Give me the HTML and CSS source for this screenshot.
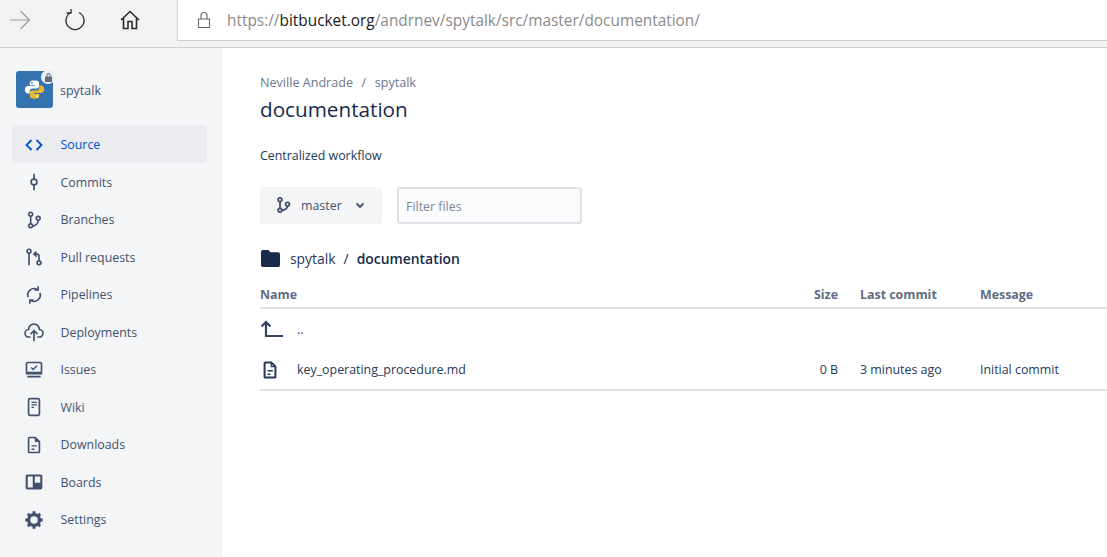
FILE: index.html
```html
<!DOCTYPE html>
<html lang="en">
<head>
    <meta charset="UTF-8">
    <title>spytalk / documentation</title>
    <link rel="stylesheet" href="styles.css">
</head>
<body>
    <header class="toolbar">
        <div class="nav-buttons">
            <svg class="nav-icon" width="24" height="24" viewBox="0 0 24 24" fill="none" stroke="#9a9a9a" stroke-width="1.2"><path d="M2 12h19M12.500 3l9 9-9 9"/></svg>
            <svg class="nav-icon" width="24" height="24" viewBox="0 0 24 24" fill="none" stroke="#2b2b2b" stroke-width="1.3"><path d="M8 4.500a9 9 0 1 0 8 0M8 1v4H3.500"/></svg>
            <svg class="nav-icon" width="24" height="24" viewBox="0 0 24 24" fill="none" stroke="#2b2b2b" stroke-width="1.6"><path d="M3 12l9-8.500 9 8.500M5.500 10v10.500h4.500v-7h4v7h4.500V10"/></svg>
        </div>
        <div class="url-box">
            <svg width="16" height="18" viewBox="0 0 16 18" fill="none" stroke="#666" stroke-width="1.1"><path d="M2.500 8h11v8.500h-11zM5 8V4.500a3 3 0 0 1 6 0V8"/></svg>
            <span class="url"><span class="url-dim">https://</span>bitbucket.org<span class="url-dim">/andrnev/spytalk/src/master/documentation/</span></span>
        </div>
    </header>

    <div class="page">
        <aside class="sidebar">
            <div class="repo">
                <div class="avatar">
                    <svg width="21" height="21" viewBox="0 0 24 24">
                        <path fill="#fff" d="M12 1.500c-3.500 0-5.500 1-5.500 3V7h6v1H4.500C2.500 8 1 9.500 1 12.300s1.500 4.400 3.500 4.400h2v-2.500c0-2 1.500-3.400 3.500-3.400h4.500c1.500 0 2.700-1.200 2.700-2.800v-3.500c0-2-2.200-3-5.700-3z"/>
                        <path fill="#e8b92c" d="M12 22.500c3.500 0 5.500-1 5.500-3V17h-6v-1h8c2 0 3.500-1.500 3.500-4.300s-1.500-4.400-3.500-4.400h-2v2.500c0 2-1.500 3.400-3.500 3.400H9.500c-1.500 0-2.700 1.200-2.700 2.800v3.500c0 2 1.700 3 5.200 3z"/>
                        <circle cx="9" cy="4.300" r="1" fill="#3572b0"/>
                        <circle cx="15" cy="19.700" r="1" fill="#fff"/>
                    </svg>
                    <span class="lock-badge">
                        <svg width="9" height="10" viewBox="0 0 9 10"><path fill="#5e6c84" d="M1 4.500h7V10H1zM2.500 4.500V3a2 2 0 0 1 4 0v1.500h-1V3a1 1 0 0 0-2 0v1.500z"/></svg>
                    </span>
                </div>
                <span class="repo-name">spytalk</span>
            </div>
            <nav class="side-nav">
                <a class="side-item active">
                    <svg class="side-icon" viewBox="0 0 24 24" fill="none" stroke="currentColor" stroke-width="2.200"><path d="M9 6l-6 6 6 6M15 6l6 6-6 6"/></svg>
                    Source
                </a>
                <a class="side-item">
                    <svg class="side-icon" viewBox="0 0 24 24" fill="none" stroke="currentColor" stroke-width="2"><circle cx="12" cy="12" r="3.500"/><path d="M12 2v6.500M12 15.500V22"/></svg>
                    Commits
                </a>
                <a class="side-item">
                    <svg class="side-icon" viewBox="0 0 24 24" fill="none" stroke="currentColor" stroke-width="2"><circle cx="8" cy="5" r="2.300"/><circle cx="8" cy="19" r="2.300"/><circle cx="17" cy="10" r="2.300"/><path d="M8 7.300v9.400M10.300 19c4 0 6.700-3 6.700-6.700"/></svg>
                    Branches
                </a>
                <a class="side-item">
                    <svg class="side-icon" viewBox="0 0 24 24" fill="none" stroke="currentColor" stroke-width="2"><circle cx="6" cy="5" r="2.300"/><circle cx="18" cy="19" r="2.300"/><path d="M6 7.300V22M18 16.700V11c0-1.500-1-2.500-2.500-2.500H13M15 5.500l-3 3 3 3"/></svg>
                    Pull requests
                </a>
                <a class="side-item">
                    <svg class="side-icon" viewBox="0 0 24 24" fill="none" stroke="currentColor" stroke-width="2"><path d="M5 14.500A7.500 7.500 0 0 1 16 5.500M19 9.500A7.500 7.500 0 0 1 8 18.500M17 1.500v4.500h-4.500M7 22.500V18h4.500"/></svg>
                    Pipelines
                </a>
                <a class="side-item">
                    <svg class="side-icon" viewBox="0 0 24 24" fill="none" stroke="currentColor" stroke-width="2"><path d="M8 18H6a4.500 4.500 0 0 1-.5-9 6.500 6.500 0 0 1 13 0 4.500 4.500 0 0 1-.5 9h-2M12 23V11M8 14.500l4-4 4 4"/></svg>
                    Deployments
                </a>
                <a class="side-item">
                    <svg class="side-icon" viewBox="0 0 24 24" fill="none"><rect x="3" y="3" width="18" height="12" rx="1.500" stroke="currentColor" stroke-width="2"/><path d="M8.500 9l2.500 2.500 4.500-4.500" stroke="currentColor" stroke-width="1.700"/><path d="M2 15h20v2.500H2zM4 19h16v2H4z" fill="currentColor"/></svg>
                    Issues
                </a>
                <a class="side-item">
                    <svg class="side-icon" viewBox="0 0 24 24" fill="none" stroke="currentColor"><rect x="5.500" y="2" width="13" height="20" rx="1.500" stroke-width="2"/><path d="M9 6.500h6.500M9 9.500h6.500M9 12.500h3" stroke-width="1.500"/></svg>
                    Wiki
                </a>
                <a class="side-item">
                    <svg class="side-icon" viewBox="0 0 24 24" fill="none" stroke="currentColor" stroke-width="2"><path d="M6.500 3h7l5 5v12a1 1 0 0 1-1 1h-11a1 1 0 0 1-1-1V4a1 1 0 0 1 1-1z"/><path d="M9 13h6.500M9 17h3.500" stroke-width="1.700"/><path d="M13.500 3v5h5" fill="currentColor" stroke-width="1"/></svg>
                    Downloads
                </a>
                <a class="side-item">
                    <svg class="side-icon" viewBox="0 0 24 24"><path fill="currentColor" fill-rule="evenodd" d="M4 3h16a2 2 0 0 1 2 2v14a2 2 0 0 1-2 2H4a2 2 0 0 1-2-2V5a2 2 0 0 1 2-2zm1 2.500a.5.5 0 0 0-.5.5v12.500h6V5.500zm8 0v7.500h6.500V5.500z"/></svg>
                    Boards
                </a>
                <a class="side-item">
                    <svg class="side-icon" viewBox="0 0 24 24" fill="none" stroke="currentColor"><circle cx="12" cy="12" r="6.500" stroke-width="4"/><path d="M12 1.500v4M12 18.500v4M1.500 12h4M18.500 12h4M4.600 4.600l2.800 2.800M16.600 16.600l2.800 2.800M4.600 19.400l2.800-2.800M16.600 7.400l2.800-2.800" stroke-width="3.500"/></svg>
                    Settings
                </a>
            </nav>
        </aside>

        <main class="content">
            <div class="crumbs"><a>Neville Andrade</a><span class="crumb-sep">/</span><a>spytalk</a></div>
            <h1>documentation</h1>
            <p class="workflow">Centralized workflow</p>

            <div class="controls">
                <button class="branch-btn">
                    <svg width="18" height="18" viewBox="0 0 24 24" fill="none" stroke="#42526e" stroke-width="2.400"><circle cx="8" cy="5" r="2.500"/><circle cx="8" cy="19" r="2.500"/><circle cx="18" cy="11" r="2.500"/><path d="M8 7.500v9M10.500 19c4.500 0 7.500-3 7.500-5.500"/></svg>
                    <span class="branch-name">master</span>
                    <svg width="10" height="7" viewBox="0 0 10 7" fill="none" stroke="#42526e" stroke-width="1.800"><path d="M1.500 1.500L5 5l3.500-3.500"/></svg>
                </button>
                <input class="filter" type="text" placeholder="Filter files">
            </div>

            <div class="path">
                <svg class="folder" width="19" height="17" viewBox="0 0 22 18" preserveAspectRatio="none"><path fill="#172b4d" d="M2 0h6.500l2.500 2.500h9a2 2 0 0 1 2 2V16a2 2 0 0 1-2 2H2a2 2 0 0 1-2-2V2a2 2 0 0 1 2-2z"/></svg>
                <a class="path-link">spytalk</a>
                <span class="path-sep">/</span>
                <strong>documentation</strong>
            </div>

            <table class="files">
                <thead>
                    <tr>
                        <th class="col-name">Name</th>
                        <th class="col-size">Size</th>
                        <th class="col-commit">Last commit</th>
                        <th>Message</th>
                    </tr>
                </thead>
                <tbody>
                    <tr>
                        <td class="col-name">
                            <div class="file-cell">
                                <span class="file-icon"><svg width="24" height="18" viewBox="0 0 24 18" fill="none" stroke="#344563" stroke-width="2.200"><path d="M23 16H6V2M1.500 6.500L6 2l4.500 4.500"/></svg></span>
                                <a>..</a>
                            </div>
                        </td>
                        <td></td>
                        <td></td>
                        <td></td>
                    </tr>
                    <tr>
                        <td class="col-name">
                            <div class="file-cell">
                                <span class="file-icon"><svg width="20" height="20" viewBox="0 0 24 24" fill="none" stroke="#253858" stroke-width="2.400"><path d="M6.500 3h7l5 5v12a1 1 0 0 1-1 1h-11a1 1 0 0 1-1-1V4a1 1 0 0 1 1-1z"/><path d="M9 13h6.500M9 17h3.500" stroke-width="1.800"/><path d="M13.500 3v5h5" stroke-width="1.500"/></svg></span>
                                <a>key_operating_procedure.md</a>
                            </div>
                        </td>
                        <td class="col-size">0 B</td>
                        <td class="col-commit">3 minutes ago</td>
                        <td>Initial commit</td>
                    </tr>
                </tbody>
            </table>
        </main>
    </div>
</body>
</html>
```

FILE: styles.css
```css
* {
    box-sizing: border-box;
}
html, body {
    height: 100%;
}
body {
    margin: 0;
    font-family: "Open Sans", "Noto Sans", sans-serif;
    font-size: 12.400px;
    color: #253858;
    background: #fff;
    overflow: hidden;
    display: flex;
    flex-direction: column;
}
a {
    color: inherit;
    text-decoration: none;
}

/* browser bar */
.toolbar {
    height: 48px;
    flex: none;
    display: flex;
    align-items: flex-start;
    background: #f2f2f2;
    border-bottom: 1px solid #cfcfcf;
}
.nav-buttons {
    width: 177px;
    height: 41px;
    padding: 0 0 1px 8px;
    display: flex;
    align-items: center;
    gap: 31px;
}
.nav-icon {
    flex: none;
}
.url-box {
    flex: 1;
    height: 41px;
    display: flex;
    align-items: center;
    gap: 15px;
    padding: 0 0 1px 18px;
    background: #fff;
    border-left: 1px solid #cfcfcf;
    border-bottom: 1px solid #cfcfcf;
}
.url {
    padding-top: 2px;
    font-family: "Open Sans", sans-serif;
    font-size: 15.400px;
    color: #1a1a1a;
}
.url-dim {
    color: #8a8a8a;
}

/* left column */
.page {
    flex: 1;
    display: flex;
    min-height: 0;
}
.sidebar {
    width: 222px;
    flex: none;
    background: #f4f5f7;
    padding: 23px 15px 0 12px;
}
.repo {
    display: flex;
    align-items: center;
    gap: 7px;
    padding-left: 4px;
    color: #42526e;
    font-size: 12.500px;
}
.repo-name {
    padding-top: 1px;
}
.avatar {
    width: 37px;
    height: 37px;
    position: relative;
    display: flex;
    align-items: center;
    justify-content: center;
    background: #3572b0;
    border-radius: 3px;
}
.lock-badge {
    position: absolute;
    top: -1px;
    right: -2px;
    width: 14px;
    height: 14px;
    display: flex;
    align-items: center;
    justify-content: center;
    background: #eceef1;
    border-radius: 50%;
}
.side-nav {
    margin-top: 17px;
    display: flex;
    flex-direction: column;
}
.side-item {
    height: 37.500px;
    display: flex;
    align-items: center;
    gap: 16.500px;
    padding: 2px 0 0 12px;
    border-radius: 3px;
    color: #42526e;
}
.side-item.active {
    background: #ebecf0;
    color: #0052cc;
}
.side-icon {
    width: 20px;
    height: 20px;
    flex: none;
}

/* main column */
.content {
    flex: 1;
    min-width: 0;
    padding: 26px 0 0 38px;
}
.crumbs {
    color: #6b778c;
    font-size: 12.600px;
    line-height: 17px;
}
.crumb-sep {
    margin: 0 8.500px;
}
h1 {
    margin: 4px 0 0;
    font-size: 20.700px;
    font-weight: 400;
    line-height: 28px;
    color: #172b4d;
}
.workflow {
    margin: 24px 0 0;
    line-height: 18px;
}
.controls {
    margin-top: 22px;
    display: flex;
    gap: 15px;
}
.branch-btn {
    width: 122px;
    height: 37px;
    padding: 0 0 1px 14px;
    display: flex;
    align-items: center;
    border: 0;
    border-radius: 3px;
    background: #f4f5f7;
    color: #42526e;
    font: inherit;
}
.branch-name {
    margin: 0 13px 0 9px;
}
.filter {
    width: 185px;
    height: 37px;
    padding: 1px 7px 0;
    border: 2px solid #dfe1e6;
    border-radius: 3px;
    background: #fafbfc;
    font: inherit;
    outline: none;
}
.filter::placeholder {
    color: #7a869a;
    opacity: 1;
}
.path {
    margin-top: 22px;
    height: 24px;
    display: flex;
    align-items: center;
    font-size: 13.900px;
    color: #172b4d;
}
.folder {
    margin-left: 1px;
}
.path-link {
    margin-left: 10px;
    color: #253858;
}
.path-sep {
    margin: 0 8px;
}
.path strong {
    font-weight: 600;
}

/* file table */
.files {
    width: 100%;
    margin-top: 13px;
    border-collapse: collapse;
    table-layout: fixed;
}
.files th {
    height: 25px;
    padding: 0 0 2px;
    text-align: left;
    font-weight: 700;
    color: #5e6c84;
    border-bottom: 2px solid #dfe1e6;
}
.files td {
    height: 41px;
    padding: 0;
}
.files tbody tr:last-child td {
    height: 41px;
    padding-top: 1px;
    border-bottom: 2px solid #dfe1e6;
}
.files .col-name {
    width: 540px;
}
.files .col-size {
    width: 60px;
    padding-right: 22px;
    text-align: right;
}
.files .col-commit {
    width: 120px;
}
.file-cell {
    display: flex;
    align-items: center;
}
.file-icon {
    width: 37px;
    flex: none;
    display: flex;
}
```
